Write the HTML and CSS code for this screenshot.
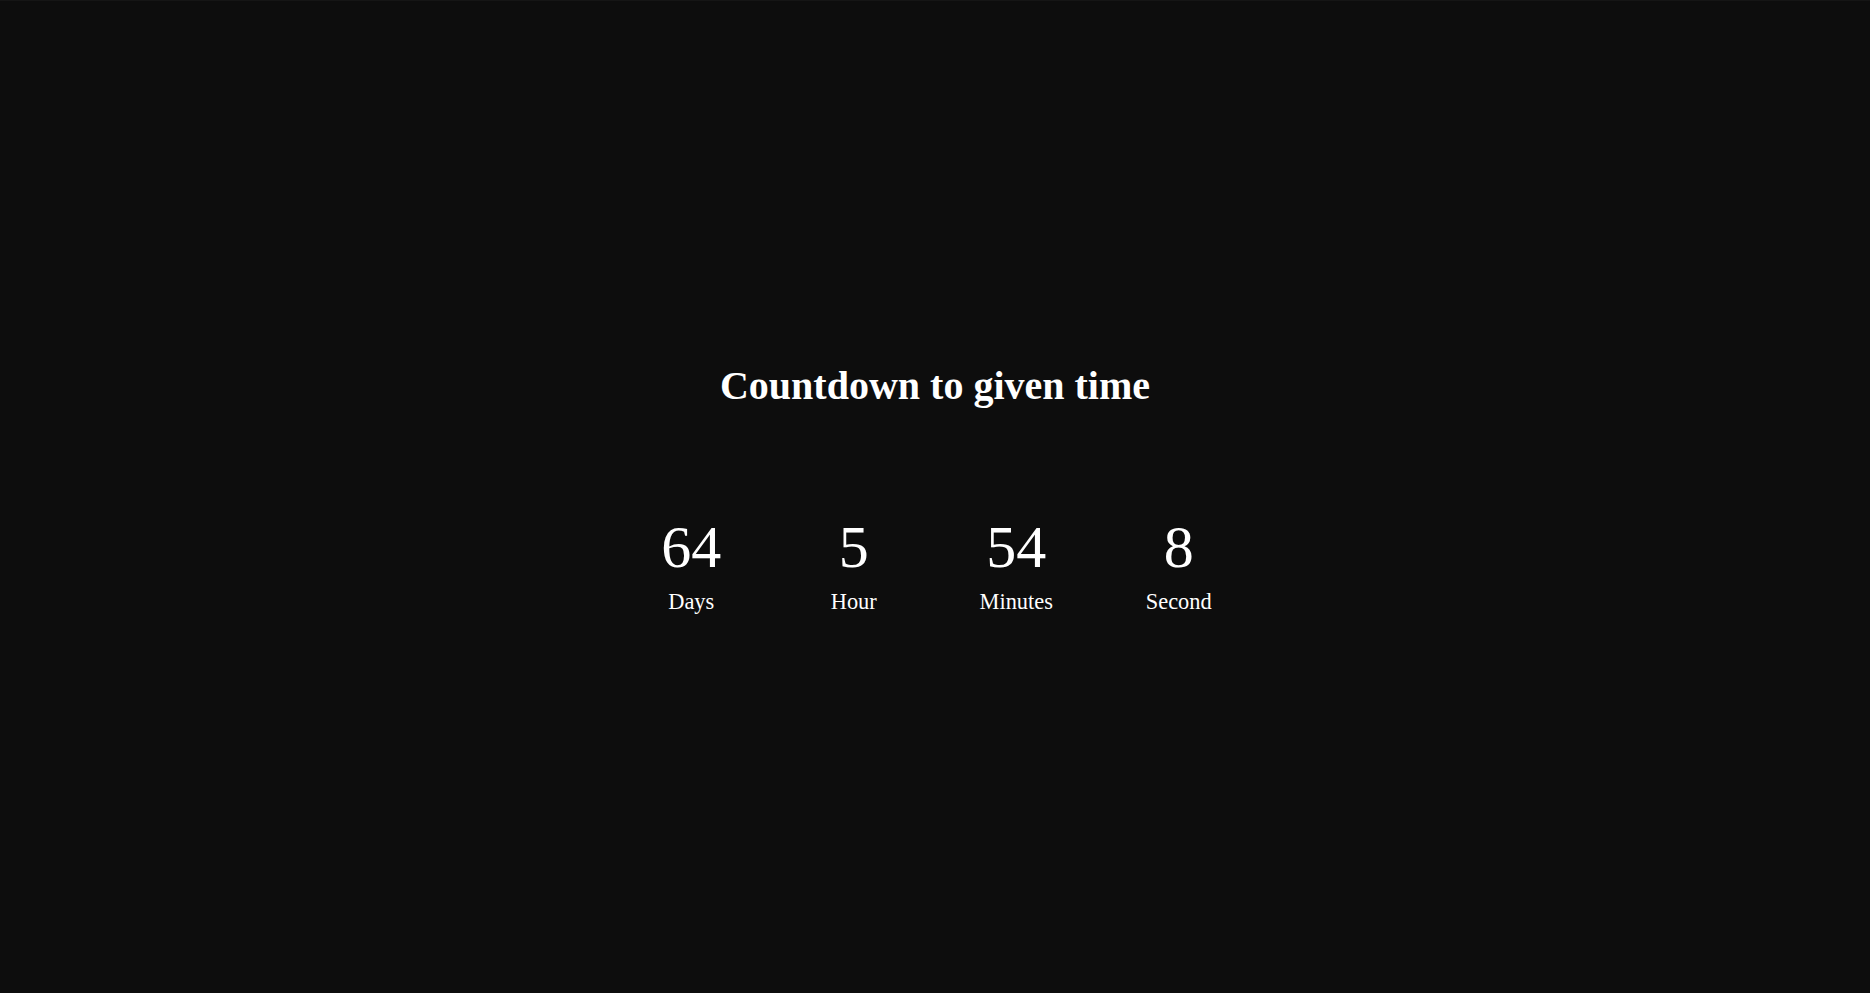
FILE: index.html
```html
<!DOCTYPE html>
<html>
<head>
<meta charset="utf-8">
<link rel="stylesheet" href="styles.css">
</head>
<body>
<main class="page">
  <h1 class="title">Countdown to given time</h1>
  <div class="countdown">
    <div class="unit"><div class="num">64</div><div class="label">Days</div></div>
    <div class="unit"><div class="num">5</div><div class="label">Hour</div></div>
    <div class="unit"><div class="num">54</div><div class="label">Minutes</div></div>
    <div class="unit"><div class="num">8</div><div class="label">Second</div></div>
  </div>
</main>
</body>
</html>
```
FILE: styles.css
```css
html, body {
  margin: 0;
  padding: 0;
  background: #0d0d0d;
  height: 100%;
}
body {
  font-family: "Liberation Serif", "Times New Roman", serif;
  color: #ffffff;
  border-top: 1px solid #151515;
  box-sizing: border-box;
}
.page {
  display: flex;
  flex-direction: column;
  align-items: center;
  padding-top: 363px;
}
.title {
  margin: 0;
  font-size: 40px;
  line-height: 44px;
  font-weight: bold;
}
.countdown {
  display: flex;
  justify-content: center;
  margin-top: 106px;
}
.unit {
  width: 162.5px;
  display: flex;
  flex-direction: column;
  align-items: center;
}
.num {
  font-size: 60px;
  line-height: 66px;
  white-space: nowrap;
}
.label {
  font-size: 22.4px;
  line-height: 25px;
  margin-top: 9px;
  white-space: nowrap;
}
```
